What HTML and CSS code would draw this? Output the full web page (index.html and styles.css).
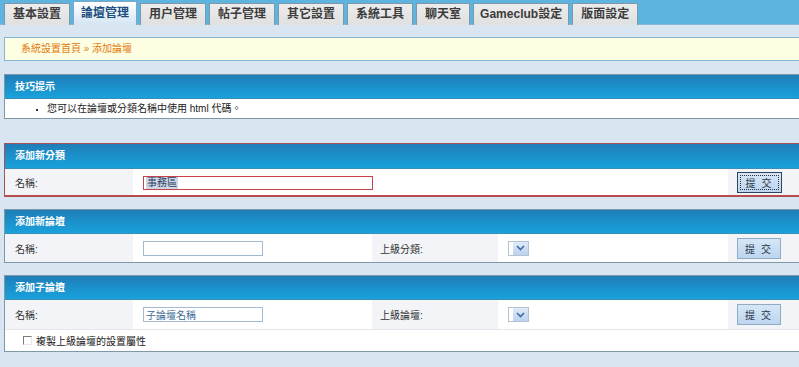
FILE: index.html
```html
<!DOCTYPE html>
<html lang="zh-Hant">
<head>
<meta charset="utf-8">
<title>添加論壇</title>
<link rel="stylesheet" href="styles.css">
</head>
<body>
<div class="tabbar">
  <a class="tab">基本設置</a>
  <a class="tab active">論壇管理</a>
  <a class="tab">用户管理</a>
  <a class="tab">帖子管理</a>
  <a class="tab">其它設置</a>
  <a class="tab">系統工具</a>
  <a class="tab">聊天室</a>
  <a class="tab tab-latin">Gameclub設定</a>
  <a class="tab">版面設定</a>
</div>
<div class="main">
  <div class="crumb">系統設置首頁 » 添加論壇</div>

  <div class="box tips">
    <div class="box-head">技巧提示</div>
    <ul class="tips-list"><li>您可以在論壇或分類名稱中使用 html 代碼。</li></ul>
  </div>

  <div class="box box-focus">
    <div class="box-head head-tall">添加新分類</div>
    <div class="row row-a">
      <div class="cell lbl c1">名稱:</div>
      <div class="cell val c24"><span class="txt txt-err"><span class="sel">事務區</span></span></div>
      <div class="cell lbl c5"><button class="btn btn-focus">提 交</button></div>
    </div>
  </div>

  <div class="box">
    <div class="box-head">添加新論壇</div>
    <div class="row row-b">
      <div class="cell lbl c1">名稱:</div>
      <div class="cell val c2"><input class="txt txt-short" type="text"></div>
      <div class="cell lbl c3">上級分類:</div>
      <div class="cell val c4"><span class="select"><span class="select-btn"><svg width="9" height="6" viewBox="0 0 9 6"><path d="M1 1 L4.5 4.5 L8 1" fill="none" stroke="#3d6aa8" stroke-width="1.6"/></svg></span></span></div>
      <div class="cell lbl c5"><button class="btn">提 交</button></div>
    </div>
  </div>

  <div class="box">
    <div class="box-head">添加子論壇</div>
    <div class="row row-c">
      <div class="cell lbl c1">名稱:</div>
      <div class="cell val c2"><input class="txt txt-short txt-val" type="text" value="子論壇名稱"></div>
      <div class="cell lbl c3">上級論壇:</div>
      <div class="cell val c4"><span class="select"><span class="select-btn"><svg width="9" height="6" viewBox="0 0 9 6"><path d="M1 1 L4.5 4.5 L8 1" fill="none" stroke="#3d6aa8" stroke-width="1.6"/></svg></span></span></div>
      <div class="cell lbl c5"><button class="btn">提 交</button></div>
    </div>
    <div class="row row-d">
      <label class="chk-label"><input class="chk" type="checkbox">複製上級論壇的設置屬性</label>
    </div>
  </div>
</div>
</body>
</html>
```
FILE: styles.css
```css
html, body {
  margin: 0;
  padding: 0;
  overflow: hidden;
}
body {
  background: #dae5f2;
  font-family: "Liberation Sans", "Noto Sans CJK TC", sans-serif;
  font-size: 10px;
  color: #333;
  width: 799px;
  height: 367px;
}

.tabbar {
  height: 25px;
  background: #5db4de;
  border-bottom: 1px solid #8db6d2;
  display: flex;
  align-items: flex-end;
  gap: 3px;
  padding-left: 4px;
  box-sizing: border-box;
}
.tab {
  height: 22px;
  box-sizing: border-box;
  padding: 0 8px;
  border: 1px solid #7c98aa;
  border-bottom: none;
  background: linear-gradient(#ececec, #e0e0e0);
  color: #3c3c3c;
  font-weight: bold;
  font-size: 12px;
  line-height: 21px;
  display: flex;
  align-items: center;
  margin-bottom: -1px;
}
.tab-latin { padding: 0 6px; }
.tab.active {
  height: 24px;
  margin-bottom: -1px;
  background: linear-gradient(#ffffff, #d3e5f3);
  border-color: #7fa6c2;
  color: #1c4d7e;
  padding: 0 7px;
}

.main {
  width: 806px;
  padding-left: 4px;
  padding-top: 12px;
}

.crumb {
  height: 22px;
  border: 1px solid #84b6d3;
  background: #fefee2;
  color: #e07a10;
  font-size: 10px;
  line-height: 22px;
  padding-left: 16px;
}

.box {
  border: 1px solid #7f98a8;
  background: #fff;
  margin-top: 13px;
}
.tips { margin-bottom: 24px; }
.box + .box { margin-top: 12px; }
.tips + .box { margin-top: 0; }

.box-head {
  height: 24px;
  box-sizing: border-box;
  background: linear-gradient(#1f7db7, #18a2dc);
  border-bottom: 1px solid #3b8db5;
  color: #fff;
  font-weight: bold;
  font-size: 10px;
  line-height: 23px;
  padding-left: 10px;
}
.head-tall { height: 25px; line-height: 24px; }

.box-focus { border-color: #a85058; }
.box-focus .row { border-bottom: 1px solid #c24848; }

.tips-list {
  margin: 0;
  padding: 0 0 0 42px;
  height: 19px;
  line-height: 19px;
  font-size: 10px;
  color: #222;
}
.tips-list li { list-style: none; position: relative; }
.tips-list li::before {
  content: "";
  position: absolute;
  left: -11px;
  top: 10px;
  width: 2px;
  height: 2px;
  background: #333;
}

.row {
  display: flex;
  align-items: stretch;
}
.row-a { height: 26px; }
.row-b { height: 28px; }
.row-c { height: 29px; border-bottom: 1px solid #e3e7ec; }
.row-d { height: 21px; }

.cell {
  display: flex;
  align-items: center;
  box-sizing: border-box;
}
.lbl { background: #f2f4f7; }
.val { background: #fff; }
.c1 { width: 128px; padding-left: 10px; }
.c2 { width: 239px; padding-left: 10px; }
.c3 { width: 126px; padding-left: 8px; }
.c4 { width: 230px; padding-left: 10px; }
.c24 { width: 595px; padding-left: 10px; }
.c5 { flex: 1; padding-left: 9px; }

.txt {
  box-sizing: border-box;
  height: 15px;
  border: 1px solid #a3bbd0;
  background: #fff;
  padding: 0 2px;
  font-family: "Liberation Sans", "Noto Sans CJK TC", sans-serif;
  font-size: 10px;
  color: #2e5a86;
  outline: none;
  margin: 0;
}
.txt-err {
  width: 230px;
  height: 14px;
  border-color: #c8404a;
  display: flex;
  align-items: center;
  margin-top: 1px;
}
.sel {
  background: #cfd6e4;
  color: #2b4466;
  line-height: 12px;
  padding: 0 1px;
}
.txt-short { width: 120px; }
.txt-val { color: #3d6a98; font-size: 10px; }

.select {
  display: inline-flex;
  width: 21px;
  height: 15px;
  box-sizing: border-box;
  border: 1px solid #b3c3d4;
  background: #fff;
  justify-content: flex-end;
}
.select-btn {
  width: 15px;
  height: 100%;
  background: linear-gradient(#dfeaf8, #bcd2ee);
  display: flex;
  align-items: center;
  justify-content: center;
}

.btn {
  width: 44px;
  height: 21px;
  box-sizing: border-box;
  border: 1px solid #90abc4;
  background: linear-gradient(#d6e6f7, #bdd5ef);
  color: #2a3a4c;
  font-family: "Noto Sans CJK TC", sans-serif;
  font-size: 10px;
  padding: 0;
  letter-spacing: 2px;
}
.btn-focus {
  width: 45px;
  border: 1px solid #2b4560;
  outline: 1px dotted #333;
  outline-offset: -4px;
}

.chk-label {
  display: flex;
  align-items: center;
  padding-left: 18px;
  font-size: 10px;
  color: #222;
}
.chk {
  appearance: none;
  -webkit-appearance: none;
  width: 9px;
  height: 9px;
  margin: 0 4px 0 0;
  box-sizing: border-box;
  border-top: 1px solid #7a7a7a;
  border-left: 1px solid #7a7a7a;
  border-right: 1px solid #e6e6e6;
  border-bottom: 1px solid #e6e6e6;
  background: #fff;
}
```
